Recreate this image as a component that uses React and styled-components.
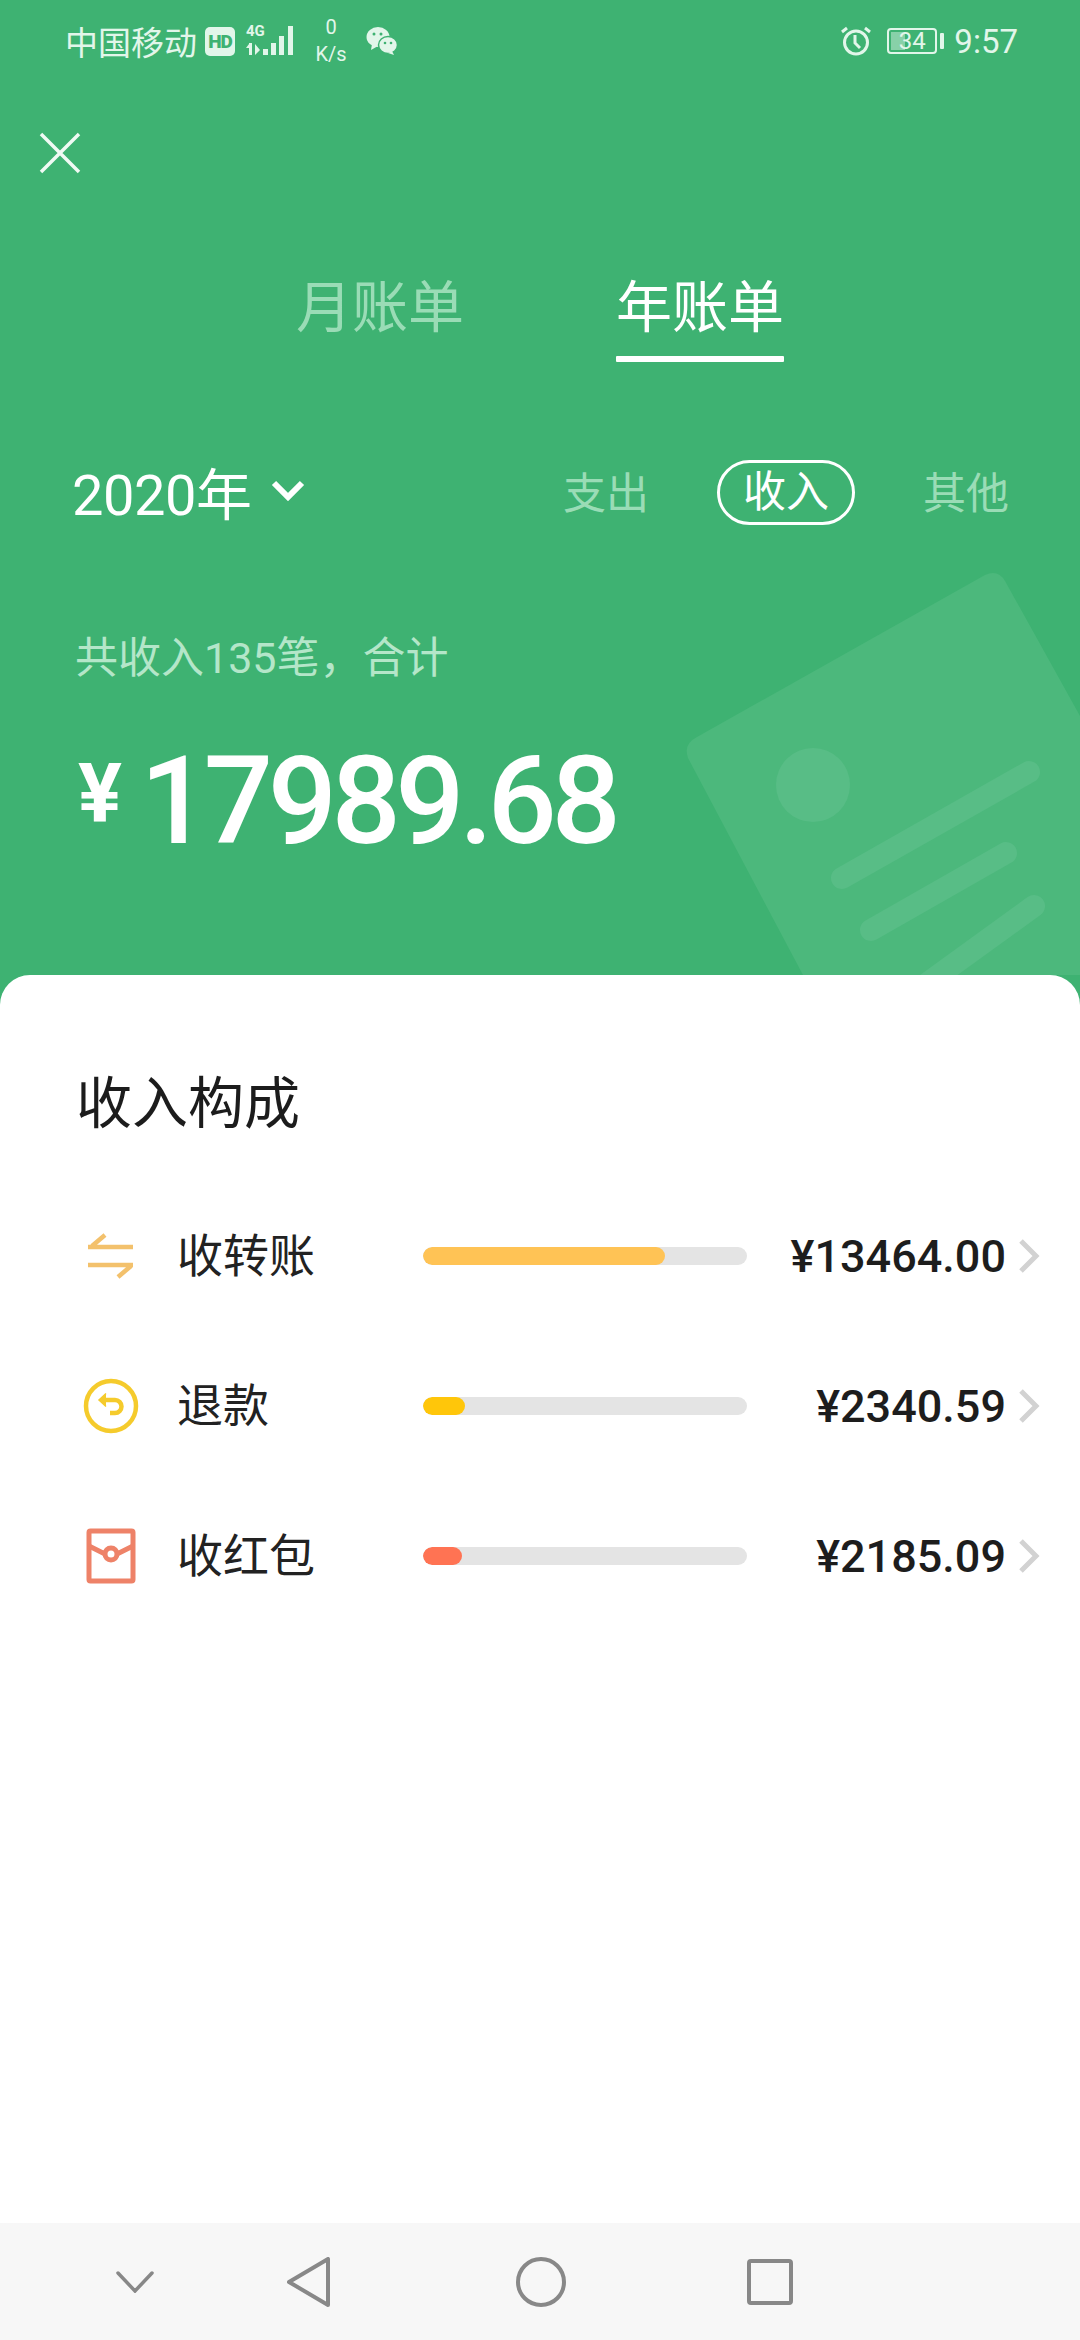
import React from 'react';
import styled, { createGlobalStyle } from 'styled-components';

const GlobalStyle = createGlobalStyle`
  html, body {
    margin: 0;
    padding: 0;
    background: #fff;
  }
  * {
    box-sizing: border-box;
  }
`;

const Page = styled.div`
  position: relative;
  display: flex;
  flex-direction: column;
  width: 1080px;
  height: 2340px;
  overflow: hidden;
  background: #3eb272;
  font-family: Roboto, 'Noto Sans CJK SC', sans-serif;
`;

const Header = styled.header`
  position: relative;
  height: 975px;
  flex: none;
  color: #fff;
`;

const Watermark = styled.svg`
  position: absolute;
  top: 0;
  left: 0;
`;

const StatusBar = styled.div`
  position: relative;
  display: flex;
  align-items: center;
  justify-content: space-between;
  height: 82px;
  padding: 0 62px 0 65px;
  color: #e2f6ea;
  font-size: 33px;
`;

const StatusGroup = styled.div`
  display: flex;
  align-items: center;
`;

const HdBadge = styled.span`
  display: flex;
  align-items: center;
  justify-content: center;
  width: 30px;
  height: 29px;
  margin: 0 11px 0 8px;
  border-radius: 5px;
  background: #e2f6ea;
  color: #3eb272;
  font-size: 19px;
  font-weight: 900;
  letter-spacing: -1px;
`;

const SignalWrap = styled.div`
  position: relative;
  width: 50px;
  height: 32px;
`;

const FourG = styled.span`
  position: absolute;
  top: -2px;
  left: 0;
  font-size: 15px;
  line-height: 16px;
  font-weight: 700;
  letter-spacing: 0;
`;

const Speed = styled.div`
  display: flex;
  flex-direction: column;
  align-items: center;
  width: 36px;
  margin: 0 17px 0 17px;
  font-size: 20px;
  line-height: 27px;
`;

const Battery = styled.div`
  position: relative;
  width: 50px;
  height: 26px;
  margin: 0 3px 0 16px;
  border: 2px solid #e2f6ea;
  border-radius: 4px;
  font-size: 24px;
  line-height: 22px;
  text-align: center;
  &::before {
    content: '';
    position: absolute;
    top: 2px;
    left: 2px;
    bottom: 2px;
    width: 14px;
    background: rgba(226, 246, 234, 0.45);
  }
  &::after {
    content: '';
    position: absolute;
    top: 3px;
    right: -9px;
    width: 4px;
    height: 16px;
    border-radius: 1px;
    background: #e2f6ea;
  }
`;

const BatteryLevel = styled.span`
  position: relative;
`;

const Time = styled.span`
  margin-left: 14px;
  font-size: 33px;
`;

const CloseButton = styled.div`
  position: relative;
  display: flex;
  height: 42px;
  margin: 50px 0 0 39px;
`;

const Tabs = styled.nav`
  position: relative;
  display: flex;
  gap: 152px;
  justify-content: center;
  margin-top: 98px;
`;

const Tab = styled.div`
  position: relative;
  padding: 0 0 8px;
  font-size: 56px;
  line-height: 72px;
  color: ${(p) => (p.$active ? '#fff' : '#9adcb6')};
  &::after {
    content: '';
    display: ${(p) => (p.$active ? 'block' : 'none')};
    height: 6px;
    margin-top: 12px;
    background: #fff;
    border-radius: 1px;
  }
`;

const FilterRow = styled.div`
  position: relative;
  display: flex;
  align-items: center;
  justify-content: space-between;
  height: 66px;
  margin-top: 87px;
  padding: 0 71px 0 72px;
`;

const YearPicker = styled.div`
  display: flex;
  align-items: center;
  gap: 20px;
  font-size: 56px;
  letter-spacing: -0.5px;
`;

const TypeList = styled.div`
  display: flex;
  align-items: center;
  gap: 68px;
`;

const TypeItem = styled.div`
  display: flex;
  align-items: center;
  justify-content: center;
  height: 65px;
  font-size: 43px;
  color: ${(p) => (p.$active ? '#fff' : '#9adcb6')};
  ${(p) =>
    p.$active &&
    `
    width: 138px;
    margin-top: 4px;
    padding-bottom: 9px;
    border: 3px solid #fff;
    border-radius: 33px;
  `}
`;

const Summary = styled.div`
  position: relative;
  margin: 106px 0 0 75px;
  font-size: 43px;
  line-height: 58px;
  color: #b4e6c9;
`;

const Total = styled.div`
  position: relative;
  display: flex;
  align-items: flex-start;
  margin: 50px 0 0 78px;
`;

const TotalSign = styled.span`
  margin-top: 16px;
  width: 62px;
  font-size: 82px;
  line-height: 80px;
  font-weight: 700;
`;

const TotalValue = styled.span`
  font-size: 122px;
  line-height: 130px;
  font-weight: 500;
  letter-spacing: -5.5px;
`;

const Sheet = styled.main`
  flex: 1;
  padding: 91px 0 0;
  background: #fff;
  border-radius: 30px 30px 0 0;
`;

const SheetTitle = styled.h2`
  margin: 0 0 39px 76px;
  font-size: 56px;
  line-height: 76px;
  font-weight: 400;
  color: #1c1c1c;
`;

const Row = styled.div`
  display: flex;
  align-items: center;
  height: 150px;
  padding: 0 40px 0 83px;
`;

const RowIcon = styled.div`
  display: flex;
  width: 56px;
  height: 56px;
  flex: none;
`;

const RowLabel = styled.div`
  width: 246px;
  margin-left: 38px;
  padding-bottom: 8px;
  flex: none;
  font-size: 46px;
  color: #222;
`;

const Track = styled.div`
  width: 324px;
  height: 18px;
  flex: none;
  border-radius: 9px;
  background: #e4e4e4;
  overflow: hidden;
`;

const Fill = styled.div`
  height: 100%;
  border-radius: 9px;
  background: ${(p) => p.$color};
`;

const Amount = styled.div`
  flex: 1;
  font-size: 45px;
  font-weight: 500;
  text-align: right;
  color: #1d1d1d;
`;

const Arrow = styled.div`
  display: flex;
  width: 22px;
  margin-left: 12px;
  flex: none;
`;

const NavBar = styled.footer`
  position: relative;
  display: flex;
  align-items: center;
  height: 117px;
  flex: none;
  background: #f7f7f7;
`;

const NavSlot = styled.div`
  display: flex;
  justify-content: center;
  width: ${(p) => p.$width}px;
`;

const TransferIcon = () => (
  <svg width="56" height="56" viewBox="0 0 56 56" fill="none" stroke="#f3c16c" strokeWidth="4.500">
    <path d="M5 19h45M5 37h45M22 7L9 18M35 49l13-11" />
  </svg>
);

const RefundIcon = () => (
  <svg width="56" height="56" viewBox="0 0 56 56" fill="none" stroke="#f5cb2c" strokeWidth="4.500">
    <circle cx="28" cy="28" r="25" />
    <path d="M21 22h11a6.500 6.500 0 0 1 0 13h-5" />
    <path d="M23 15.500L16 22l7 6.500" fill="#f5cb2c" stroke="#f5cb2c" strokeWidth="1.500" />
  </svg>
);

const EnvelopeIcon = () => (
  <svg width="56" height="56" viewBox="0 0 56 56" fill="none" stroke="#ee8268" strokeWidth="5">
    <rect x="6" y="3" width="44" height="50" rx="1.500" />
    <path d="M6 18l16 8M50 18l-16 8" />
    <circle cx="28" cy="26" r="6" />
  </svg>
);

const rows = [
  { label: '收转账', amount: '¥13464.00', width: 242, color: '#ffc355', icon: <TransferIcon /> },
  { label: '退款', amount: '¥2340.59', width: 42, color: '#ffc60a', icon: <RefundIcon /> },
  { label: '收红包', amount: '¥2185.09', width: 39, color: '#ff7353', icon: <EnvelopeIcon /> },
];

export default function App() {
  return (
    <Page>
      <GlobalStyle />
      <Header>
        <Watermark width="1080" height="975" viewBox="0 0 1080 975">
          <path
            d="M697 737L985 575q13-6 20 6L1080 716V975H803L688 758q-5-14 9-21z"
            fill="#4cb87c"
          />
          <circle cx="813" cy="785" r="37" fill="#58bd86" />
          <g stroke="#58bd86" strokeWidth="22" strokeLinecap="round">
            <path d="M842 878L1029 772" />
            <path d="M871 930L1006 853" />
            <path d="M925 985L1034 906" />
          </g>
        </Watermark>

        <StatusBar>
          <StatusGroup>
            <span>中国移动</span>
            <HdBadge>HD</HdBadge>
            <SignalWrap>
              <FourG>4G</FourG>
              <svg width="50" height="32" viewBox="0 0 50 32" fill="#e2f6ea">
                <path d="M3 18h3v12H3zM0 23l3-4v4zM9 19l5 6-5 5zM17 24h5v6h-5zM25 18h5v12h-5zM33 11h5v19h-5zM42 1h5v29h-5z" />
              </svg>
            </SignalWrap>
            <Speed>
              <span>0</span>
              <span>K/s</span>
            </Speed>
            <svg width="32" height="30" viewBox="0 0 32 30" fill="#e2f6ea">
              <ellipse cx="12" cy="11" rx="11.500" ry="10" />
              <path d="M6 18l-1 6 7-4z" />
              <ellipse cx="22" cy="19" rx="9.500" ry="8.500" stroke="#3eb272" strokeWidth="1.500" />
              <path d="M26 25l2 4-6-2z" />
              <circle cx="8" cy="8" r="1.500" fill="#3eb272" />
              <circle cx="15" cy="8" r="1.500" fill="#3eb272" />
              <circle cx="19" cy="17" r="1.300" fill="#3eb272" />
              <circle cx="25" cy="17" r="1.300" fill="#3eb272" />
            </svg>
          </StatusGroup>
          <StatusGroup>
            <svg width="30" height="30" viewBox="0 0 30 30" fill="none" stroke="#e2f6ea" strokeWidth="3">
              <circle cx="15" cy="16.500" r="11.500" />
              <path d="M14 9v8l5 5M1 6l5-4M29 6l-5-4" />
            </svg>
            <Battery>
              <BatteryLevel>34</BatteryLevel>
            </Battery>
            <Time>9:57</Time>
          </StatusGroup>
        </StatusBar>

        <CloseButton>
          <svg width="42" height="42" viewBox="0 0 42 42" stroke="#f0faf4" strokeWidth="3.500">
            <path d="M2 2l38 38M40 2L2 40" />
          </svg>
        </CloseButton>

        <Tabs>
          <Tab>月账单</Tab>
          <Tab $active>年账单</Tab>
        </Tabs>

        <FilterRow>
          <YearPicker>
            <span>2020年</span>
            <svg width="34" height="22" viewBox="0 0 34 22" fill="none" stroke="#fff" strokeWidth="6">
              <path d="M3 4l14 14L31 4" />
            </svg>
          </YearPicker>
          <TypeList>
            <TypeItem>支出</TypeItem>
            <TypeItem $active>收入</TypeItem>
            <TypeItem>其他</TypeItem>
          </TypeList>
        </FilterRow>

        <Summary>共收入135笔，合计</Summary>
        <Total>
          <TotalSign>¥</TotalSign>
          <TotalValue>17989.68</TotalValue>
        </Total>
      </Header>

      <Sheet>
        <SheetTitle>收入构成</SheetTitle>
        {rows.map((row) => (
          <Row key={row.label}>
            <RowIcon>{row.icon}</RowIcon>
            <RowLabel>{row.label}</RowLabel>
            <Track>
              <Fill $color={row.color} style={{ width: row.width }} />
            </Track>
            <Amount>{row.amount}</Amount>
            <Arrow>
              <svg width="22" height="34" viewBox="0 0 22 34" fill="none" stroke="#d2d2d2" strokeWidth="5">
                <path d="M3 2l15 15L3 32" />
              </svg>
            </Arrow>
          </Row>
        ))}
      </Sheet>

      <NavBar>
        <NavSlot $width={270}>
          <svg width="38" height="22" viewBox="0 0 38 22" fill="none" stroke="#888" strokeWidth="3.500" strokeLinecap="round">
            <path d="M2 2l17 18L36 2" />
          </svg>
        </NavSlot>
        <NavSlot $width={78}>
          <svg width="44" height="50" viewBox="0 0 44 50" fill="none" stroke="#888" strokeWidth="4" strokeLinejoin="round">
            <path d="M41 2v46L2 25z" />
          </svg>
        </NavSlot>
        <NavSlot $width={386}>
          <svg width="50" height="50" viewBox="0 0 50 50" fill="none" stroke="#888" strokeWidth="4">
            <circle cx="25" cy="25" r="23" />
          </svg>
        </NavSlot>
        <NavSlot $width={72}>
          <svg width="46" height="46" viewBox="0 0 46 46" fill="none" stroke="#888" strokeWidth="4">
            <rect x="2" y="2" width="42" height="42" rx="2" />
          </svg>
        </NavSlot>
      </NavBar>
    </Page>
  );
}
